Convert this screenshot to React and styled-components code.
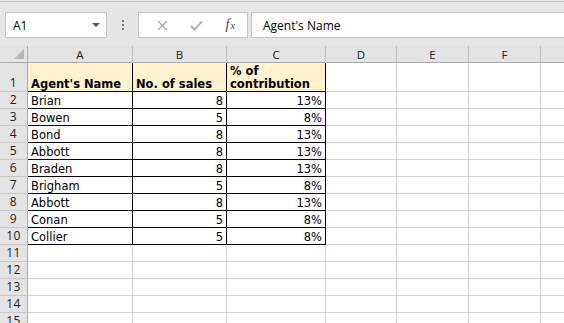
import styled, { createGlobalStyle } from "styled-components";

const GlobalStyle = createGlobalStyle`
  html, body { margin: 0; padding: 0; }
  body { background: #fff; }
`;

const columns = [
  { key: "A", width: 105 },
  { key: "B", width: 94 },
  { key: "C", width: 99 },
  { key: "D", width: 71 },
  { key: "E", width: 72 },
  { key: "F", width: 72 },
  { key: "G", width: 72 },
];

const agents = [
  ["Brian", 8, "13%"],
  ["Bowen", 5, "8%"],
  ["Bond", 8, "13%"],
  ["Abbott", 8, "13%"],
  ["Braden", 8, "13%"],
  ["Brigham", 5, "8%"],
  ["Abbott", 8, "13%"],
  ["Conan", 5, "8%"],
  ["Collier", 5, "8%"],
];

const EMPTY_ROWS = 5;

const App = () => {
  const cellFor = (rowIdx, colIdx) => {
    // row 0 is the table header, rows 1..9 the data
    if (colIdx > 2 || rowIdx > agents.length) return { text: "" };
    if (rowIdx === 0) {
      return {
        text: ["Agent's Name", "No. of sales", "% of contribution"][colIdx],
        head: true,
        boxed: true,
      };
    }
    const row = agents[rowIdx - 1];
    return { text: row[colIdx], boxed: true, right: colIdx > 0 };
  };

  const totalRows = agents.length + 1 + EMPTY_ROWS;

  return (
    <Page>
      <GlobalStyle />
      <FormulaBar>
        <NameBox>
          <span>A1</span>
          <Caret />
        </NameBox>
        <Dots>
          <i />
          <i />
          <i />
        </Dots>
        <ButtonGroup>
          <IconSlot>
            <svg width="11" height="11" viewBox="0 0 11 11">
              <path d="M1 1 L10 10 M10 1 L1 10" stroke="#a8a8a8" strokeWidth="1.3" fill="none" />
            </svg>
          </IconSlot>
          <IconSlot>
            <svg width="13" height="11" viewBox="0 0 13 11">
              <path d="M1 6 L4.5 9.5 L12 1.5" stroke="#a8a8a8" strokeWidth="1.8" fill="none" />
            </svg>
          </IconSlot>
          <IconSlot>
            <Fx>
              f<sub>x</sub>
            </Fx>
          </IconSlot>
        </ButtonGroup>
        <FormulaInput>Agent's Name</FormulaInput>
      </FormulaBar>

      <Sheet $cols={columns.map((c) => c.width + "px").join(" ")}>
        <Corner>
          <Triangle />
        </Corner>
        {columns.map((c) => (
          <ColHead key={c.key}>{c.key}</ColHead>
        ))}
        {Array.from({ length: totalRows }).map((_, r) => (
          <Row key={r}>
            <RowHead>{r + 1}</RowHead>
            {columns.map((c, ci) => {
              const cell = cellFor(r, ci);
              return (
                <Cell key={c.key} $head={cell.head} $boxed={cell.boxed} $right={cell.right}>
                  <span>{cell.text}</span>
                </Cell>
              );
            })}
          </Row>
        ))}
      </Sheet>
    </Page>
  );
};

const Page = styled.div`
  width: 564px;
  height: 323px;
  overflow: hidden;
  background: #e6e6e6;
`;

const FormulaBar = styled.div`
  margin-top: 1px;
  border-top: 1px solid #c6c6c6;
  height: 45px;
  box-sizing: border-box;
  padding: 10px 0 0 5px;
  display: flex;
  align-items: flex-start;
  font-family: "Open Sans", "Noto Sans", sans-serif;
  font-size: 12px;
  color: #000;
`;

const NameBox = styled.div`
  box-sizing: border-box;
  width: 102px;
  height: 26px;
  background: #fff;
  border: 1px solid #c6c6c6;
  display: flex;
  align-items: center;
  justify-content: space-between;
  padding: 0 6px 0 7px;
`;

const Caret = styled.div`
  width: 0;
  height: 0;
  border-left: 4px solid transparent;
  border-right: 4px solid transparent;
  border-top: 4px solid #555;
`;

const Dots = styled.div`
  width: 31px;
  height: 26px;
  display: flex;
  flex-direction: column;
  align-items: center;
  justify-content: center;
  gap: 2px;
  i {
    width: 2px;
    height: 2px;
    background: #7a7a7a;
  }
`;

const ButtonGroup = styled.div`
  box-sizing: border-box;
  width: 110px;
  height: 26px;
  background: #fff;
  border: 1px solid #c6c6c6;
  display: flex;
  align-items: center;
  padding-left: 7px;
`;

const IconSlot = styled.div`
  width: 36px;
  display: flex;
  justify-content: center;
  align-items: center;
`;

const Fx = styled.span`
  font-family: "Liberation Serif", serif;
  font-style: italic;
  font-size: 14px;
  color: #444;
  sub {
    font-size: 10px;
    vertical-align: 0;
    margin-left: 1px;
  }
`;

const FormulaInput = styled.div`
  box-sizing: border-box;
  margin-left: 3px;
  flex: 1;
  height: 26px;
  background: #fff;
  border: 1px solid #c6c6c6;
  border-right: none;
  display: flex;
  align-items: center;
  padding-left: 11px;
`;

const Sheet = styled.div`
  display: grid;
  grid-template-columns: 28px ${(p) => p.$cols};
  grid-template-rows: 17px 29px;
  grid-auto-rows: 17px;
  background: #fff;
`;

const Row = styled.div`
  display: contents;
`;

const Corner = styled.div`
  box-sizing: border-box;
  background: #e3e3e3;
  border-right: 1px solid #ababab;
  border-bottom: 1px solid #ababab;
  display: flex;
  justify-content: flex-end;
  align-items: flex-end;
  padding: 0 3px 3px 0;
`;

const Triangle = styled.div`
  width: 0;
  height: 0;
  border-left: 10px solid transparent;
  border-bottom: 10px solid #b6b6b6;
`;

const ColHead = styled.div`
  box-sizing: border-box;
  background: #e3e3e3;
  border-right: 1px solid #bcbcbc;
  border-bottom: 1px solid #ababab;
  display: flex;
  align-items: center;
  justify-content: center;
  font-family: "Open Sans", "Noto Sans", sans-serif;
  font-size: 11.5px;
  color: #222;
`;

const RowHead = styled.div`
  box-sizing: border-box;
  background: #e3e3e3;
  border-right: 1px solid #ababab;
  border-bottom: 1px solid #c8c8c8;
  display: flex;
  align-items: flex-end;
  justify-content: center;
  padding-bottom: 1px;
  font-family: "Open Sans", "Noto Sans", sans-serif;
  font-size: 12px;
  letter-spacing: 0.5px;
  line-height: 14px;
  color: #222;
`;

const Cell = styled.div`
  box-sizing: border-box;
  min-width: 0;
  overflow: hidden;
  background: ${(p) => (p.$head ? "#fff2cc" : "#fff")};
  border-right: 1px solid ${(p) => (p.$boxed ? "#000" : "#d4d4d4")};
  border-bottom: 1px solid ${(p) => (p.$boxed ? "#000" : "#d4d4d4")};
  display: flex;
  align-items: flex-end;
  justify-content: ${(p) => (p.$right ? "flex-end" : "flex-start")};
  text-align: ${(p) => (p.$right ? "right" : "left")};
  padding: 0 3px;
  font-family: "DejaVu Sans", Verdana, sans-serif;
  font-size: 11.5px;
  line-height: 13px;
  font-weight: ${(p) => (p.$head ? 700 : 400)};
  color: #000;
`;

export default App;
